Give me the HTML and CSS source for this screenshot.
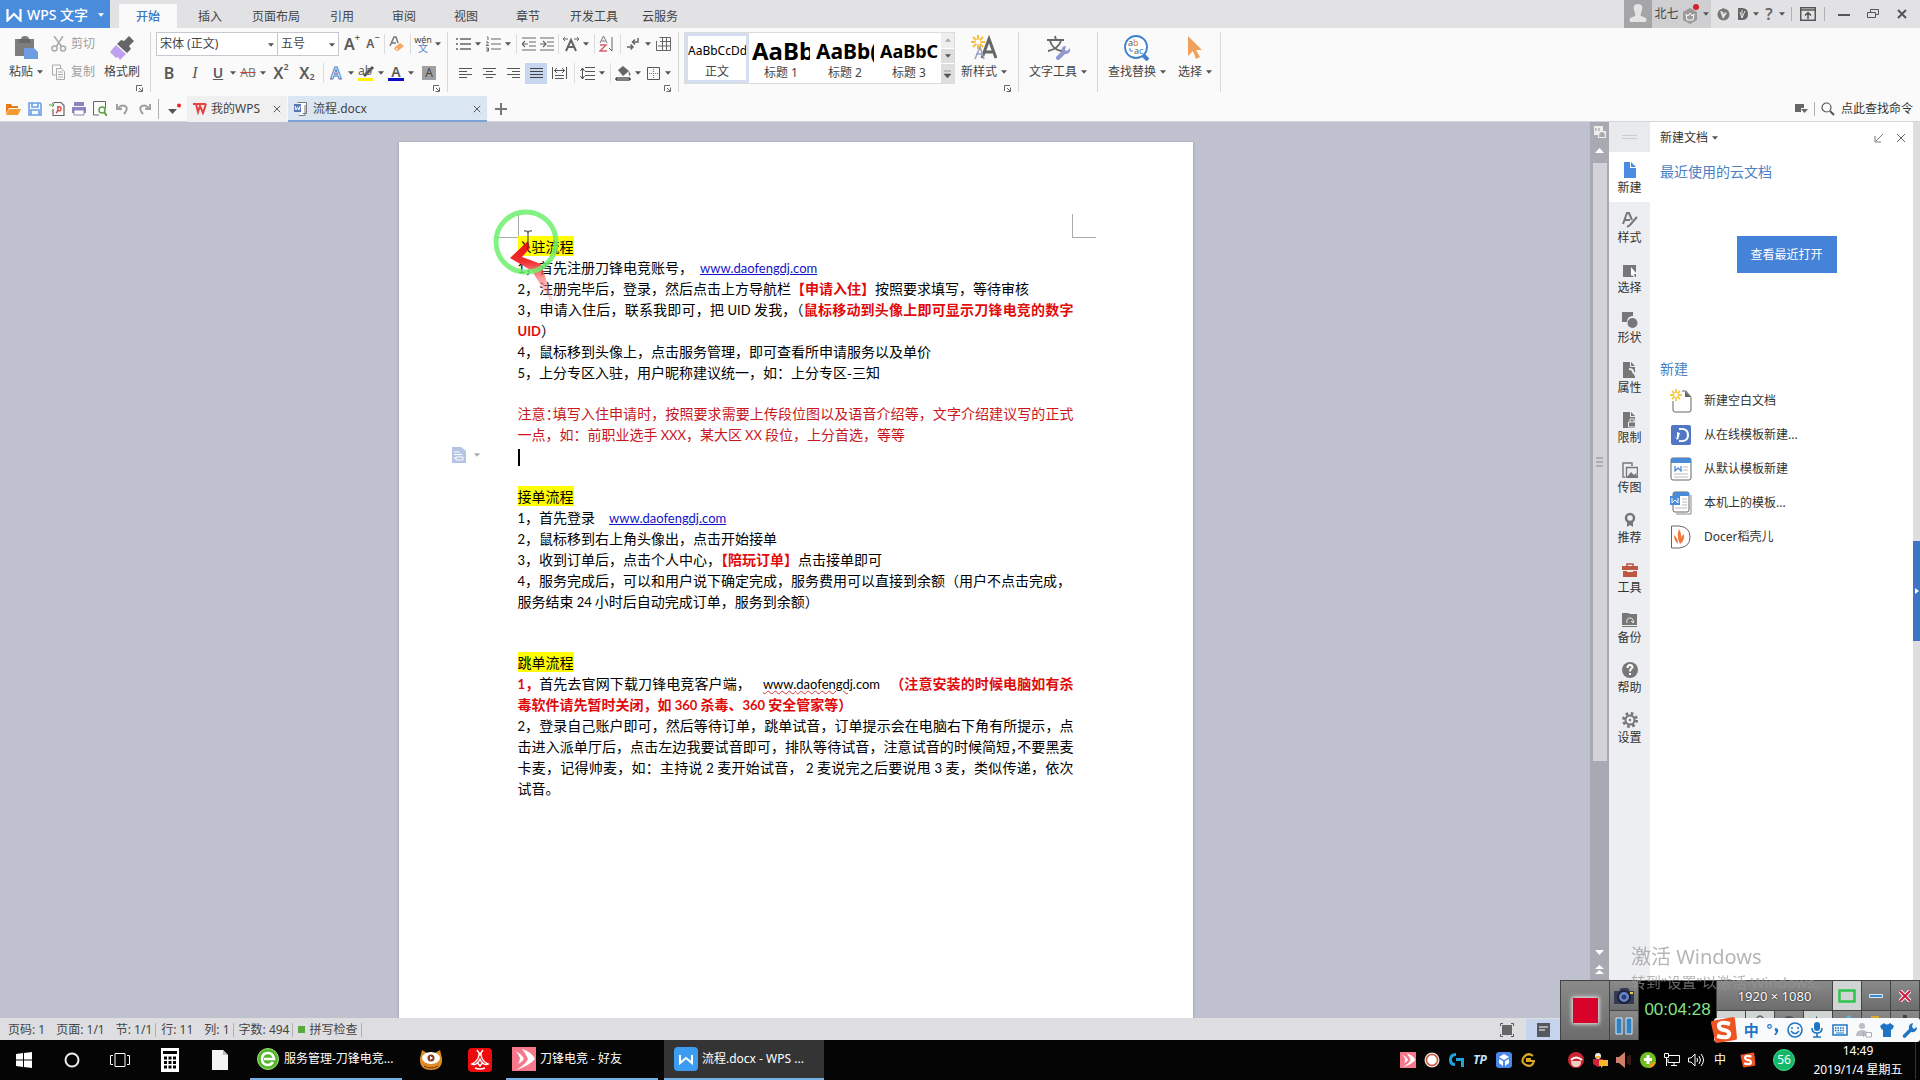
FILE: index.html
```html
<!DOCTYPE html>
<html lang="zh-CN">
<head>
<meta charset="utf-8">
<title>流程.docx - WPS 文字</title>
<link rel="stylesheet" href="styles.css">
</head>
<body>
<svg class="sprite" aria-hidden="true">
  <symbol id="caret" viewBox="0 0 7 4"><path d="M0 0h7L3.500 4z" fill="currentColor"/></symbol>
  <symbol id="close" viewBox="0 0 10 10"><path d="M1 1l8 8M9 1L1 9" stroke="currentColor" fill="none"/></symbol>
  <symbol id="launch" viewBox="0 0 7 7"><path d="M.5 6V.5H6M6.500 2.500v4h-4M3 3l3 3" stroke="#666" fill="none"/></symbol>
  <symbol id="wmark" viewBox="0 0 16 14"><path d="M1.500 1v11.500L8 6l6.500 6.500V1" fill="none" stroke="currentColor" stroke-width="2.200"/></symbol>
  <symbol id="sogou" viewBox="0 0 28 28"><path d="M2 5L23 1q2 0 2 2l2 19q0 2-2 2L7 27q-2 0-2-2L1 7q0-2 1-2z" fill="#ee5322"/><path d="M20 8q-10-3-11 1t5 5 5 5-12 1" fill="none" stroke="#fff" stroke-width="4"/></symbol>
  <symbol id="blade" viewBox="0 0 24 24"><path d="M0 0h24v24H0z" fill="#f7778b"/><path d="M10 2q10 3 13 10Q17 19 4 23q10-6 12-11Q14 7 10 2zM3 4q7 3 9 8-2 3-6 5 2-3 2-6-1-4-5-7z" fill="#fff"/></symbol>
</svg>
<div class="app">
  <header class="title">
    <button class="brand"><svg width="16" height="14"><use href="#wmark"/></svg><b>WPS 文字</b><svg class="caret"><use href="#caret"/></svg></button>
    <nav class="menu">
      <button class="on">开始</button><button>插入</button><button class="long">页面布局</button><button>引用</button><button>审阅</button><button>视图</button><button>章节</button><button class="long">开发工具</button><button>云服务</button>
    </nav>
    <div class="account">
      <span class="avatar"><svg width="20" height="20" viewBox="0 0 20 20"><path d="M10 1c4 0 5 3 4 6-1 4-2 4-1 6l5 2q1 1 0 4H2q-1-3 0-4l5-2c1-2 0-2-1-6-1-3 0-6 4-6z" fill="#e4e4e4"/></svg></span>
      <button class="user">北七<svg width="18" height="22" viewBox="0 0 18 22"><path d="M8 5l7 4v8l-7 4-7-4V9z" fill="#9a9a9a"/><path d="M4 11l2 2 2-3 2 3 2-2-1 6H5z" fill="none" stroke="#fff"/><circle cx="14" cy="4" r="3" fill="#d3222b"/></svg><svg class="caret"><use href="#caret"/></svg></button>
      <button class="b24"><svg width="13" height="13" viewBox="0 0 13 13"><circle cx="6.500" cy="6.500" r="6" fill="#777"/><path d="M3 3l7 2-4 6z" fill="#e2e2e4"/><path d="M6 0l1 6" stroke="#777"/></svg></button>
      <button class="b16"><svg width="12" height="12" viewBox="0 0 12 12"><path d="M1 0h4q6 0 6 6t-6 6H1z" fill="#666"/><path d="M3 4l2 6 3-7M5 10V2" stroke="#e2e2e4" fill="none"/></svg></button><svg class="caret c10"><use href="#caret"/></svg>
      <button class="b16 help">?</button><svg class="caret c10"><use href="#caret"/></svg>
      <i class="vs"></i>
      <button class="b24"><svg width="16" height="14" viewBox="0 0 16 14"><path d="M.7.7h14.600v12.600H.7zM.7 3h14.600M8 12V6M5 8.500l3-3 3 3" fill="none" stroke="#555" stroke-width="1.500"/></svg></button>
      <i class="vs"></i>
      <button class="win"><svg width="12" height="12" viewBox="0 0 12 12"><path d="M0 7h12" stroke="#555" stroke-width="2"/></svg></button>
      <button class="win"><svg width="12" height="10" viewBox="0 0 12 10"><path d="M.5 3.500h8v5h-8zM3.500 3V.5h8v5H9" fill="none" stroke="#555"/></svg></button>
      <button class="win"><svg width="10" height="10" viewBox="0 0 10 10"><path d="M1 1l8 8M9 1L1 9" stroke="#555" stroke-width="2"/></svg></button>
    </div>
  </header>

  <section class="ribbon">
    <div class="group clip">
      <button class="big"><svg width="26" height="26" viewBox="0 0 26 26"><path d="M2 4h6q0-3 4-3t4 3h5v9h-9v8H2z" fill="#7d7d7d"/><path d="M6 4h11v4H6z" fill="#696969"/><path d="M11 13h10l4 4v7H11z" fill="#6f9be0"/></svg><span>粘贴<svg class="caret"><use href="#caret"/></svg></span></button>
      <div class="pair">
        <button><svg width="16" height="16" viewBox="0 0 16 16"><g fill="none" stroke="#aaa" stroke-width="1.500"><path d="M3 0l8 11M12 0L5 11"/><circle cx="3.500" cy="12.500" r="2.500"/><circle cx="12" cy="12.500" r="2.500"/></g></svg>剪切</button>
        <button><svg width="16" height="16" viewBox="0 0 16 16"><path d="M5 11H1.500v-10h8v3M5.500 4.500h5l3 3v8h-8zM7 8h5M7 10.500h5M7 13h5" fill="none" stroke="#aaa"/></svg>复制</button>
      </div>
      <button class="big"><svg width="26" height="26" viewBox="0 0 26 26"><path d="M20 1l5 5-5 5 2 3-4 4-10-9 4-4 3 1z" fill="#666"/><path d="M7 10l10 9-6 6-2-3-2 1-6-6z" fill="#bf9ff0"/></svg><span>格式刷</span></button>
      <svg class="launch"><use href="#launch"/></svg>
    </div>
    <div class="group font">
      <div class="row">
        <label class="combo wide"><select aria-label="字体"><option>宋体 (正文)</option></select><svg class="caret"><use href="#caret"/></svg></label>
        <label class="combo"><select aria-label="字号"><option>五号</option></select><svg class="caret"><use href="#caret"/></svg></label>
        <button class="b26 glyph">A<sup>+</sup></button><button class="b16 glyph small">A<sup>−</sup></button><i class="sep"></i>
        <button class="b20"><svg width="16" height="16" viewBox="0 0 16 16"><path d="M1 10L5 1h2l2 6M3 7h4" fill="none" stroke="#777" stroke-width="1.500"/><path d="M5 12l6-5 4 3-6 5q-3 0-4-3z" fill="#f4a868"/><path d="M7 12l2 2" stroke="#fff"/></svg></button><i class="sep"></i>
        <button class="b20 pinyin">wén<em>文</em></button><svg class="caret c10"><use href="#caret"/></svg>
      </div>
      <div class="row">
        <button class="b26 glyph">B</button><button class="b26 glyph ital">I</button><button class="b20 glyph und">U</button><svg class="caret c10"><use href="#caret"/></svg>
        <button class="b20 strike">AB</button><svg class="caret c10"><use href="#caret"/></svg>
        <button class="b26 glyph">X<sup>2</sup></button><button class="b26 glyph">X<sub>2</sub></button><i class="sep"></i>
        <button class="b20 glyph outline">A</button><svg class="caret c10"><use href="#caret"/></svg>
        <button class="b20"><svg width="17" height="16" viewBox="0 0 17 16"><path d="M0 13h15v3H0z" fill="#fff200"/><path d="M6 11l9-9" stroke="#555" stroke-width="3"/><text x="0" y="10" font-size="12" fill="#666">ab</text></svg></button><svg class="caret c10"><use href="#caret"/></svg>
        <button class="b20 glyph bar">A</button><svg class="caret c10"><use href="#caret"/></svg>
        <button class="b26"><span class="shade">A</span></button>
      </div>
      <svg class="launch"><use href="#launch"/></svg>
    </div>
    <div class="group para">
      <div class="row">
        <button class="b20"><svg width="15" height="14" viewBox="0 0 15 14"><path d="M4 2h11M4 7h11M4 12h11M0 2h2M0 7h2M0 12h2" stroke="#666" stroke-width="1.500"/></svg></button><svg class="caret c10"><use href="#caret"/></svg>
        <button class="b20"><svg width="15" height="16" viewBox="0 0 15 16"><path d="M5 3h10M5 8h10M5 13h10" stroke="#666"/><path d="M1 1h1v3M0 6h2v1.500l-2 2h3M0 12h2.500v3H0M1 13.500h1" stroke="#666" fill="none"/></svg></button><svg class="caret c10"><use href="#caret"/></svg><i class="sep"></i>
        <button class="b20"><svg width="14" height="14" viewBox="0 0 14 14"><path d="M0 1h14M7 5h7M7 9h7M0 13h14M0 7h6M3 4L0 7l3 3" fill="none" stroke="#666" stroke-width="1.200"/></svg></button>
        <button class="b16"><svg width="14" height="14" viewBox="0 0 14 14"><path d="M0 1h14M7 5h7M7 9h7M0 13h14M0 7h6M3 4l3 3-3 3" fill="none" stroke="#666" stroke-width="1.200"/></svg></button><i class="sep"></i>
        <button class="b20"><svg width="18" height="16" viewBox="0 0 18 16"><path d="M4 15L9 4l5 11M6 11h6" stroke="#666" stroke-width="2" fill="none"/><path d="M1 3h5M3 1L1 3l2 2M12 3h5M15 1l2 2-2 2" stroke="#666" fill="none"/></svg></button><svg class="caret c10"><use href="#caret"/></svg><i class="sep"></i>
        <button class="b20"><svg width="16" height="16" viewBox="0 0 16 16"><path d="M1 7l3.500-7L8 7M2.500 5h4" stroke="#777" fill="none"/><path d="M1 9h6l-6 6h7" stroke="#d8606a" stroke-width="1.500" fill="none"/><path d="M13 1v14l-3-3" stroke="#666" fill="none"/></svg></button><i class="sep"></i>
        <button class="b20"><svg width="12" height="14" viewBox="0 0 12 14"><path d="M11 1v4H6M8 2.500L5.500 5 8 7.500M0 10h6M3.500 7.500L6 10l-2.500 2.500" stroke="#666" fill="none" stroke-width="1.500"/></svg></button><svg class="caret c10"><use href="#caret"/></svg>
        <button class="b20"><svg width="15" height="14" viewBox="0 0 15 14"><path d="M3.500.5h11v13H.5V4M4 4.500h10M2 9h12M6.500 1v12M10.500 1v12" fill="none" stroke="#666"/></svg></button>
      </div>
      <div class="row">
        <button class="b24"><svg width="13" height="12" viewBox="0 0 13 12"><path d="M0 1.500h13M0 4.500h8M0 7.500h13M0 10.500h8" stroke="#555"/></svg></button>
        <button class="b24"><svg width="13" height="12" viewBox="0 0 13 12"><path d="M0 1.500h13M3 4.500h7M0 7.500h13M3 10.500h7" stroke="#555"/></svg></button>
        <button class="b24"><svg width="13" height="12" viewBox="0 0 13 12"><path d="M0 1.500h13M5 4.500h8M0 7.500h13M5 10.500h8" stroke="#555"/></svg></button>
        <button class="b22 pressed"><svg width="13" height="12" viewBox="0 0 13 12"><path d="M0 1.500h13M0 4.500h13M0 7.500h13M0 10.500h13" stroke="#444"/></svg></button>
        <button class="b24"><svg width="15" height="12" viewBox="0 0 15 12"><path d="M.5 0v12M14.500 0v12M2 3.500h11M5 1L2.500 3.500 5 6M10 1l2.500 2.500L10 6M3 8.500h9M3 11.500h9" stroke="#555" fill="none"/></svg></button><i class="sep"></i>
        <button class="b20"><svg width="15" height="13" viewBox="0 0 15 13"><path d="M5 .5h10M5 4.500h10M5 8.500h10M5 12.500h10M2.500 1v11M.5 4l2-3 2 3M.5 9l2 3 2-3" stroke="#555" fill="none"/></svg></button><svg class="caret c10"><use href="#caret"/></svg><i class="sep"></i>
        <button class="b20"><svg width="16" height="16" viewBox="0 0 16 16"><path d="M3 5l5-4 6 5-6 5zM14 6q2 3 1 5-2-1-1-5z" fill="#666"/><path d="M1 13h14v2H1z" fill="#fff" stroke="#000"/></svg></button><svg class="caret c10"><use href="#caret"/></svg>
        <button class="b20"><svg width="13" height="13" viewBox="0 0 13 13"><path d="M.5.5h12v12H.5z" fill="none" stroke="#555"/><path d="M6.500 2v9M2 6.500h9" stroke="#777" stroke-dasharray="1 1"/></svg></button><svg class="caret c10"><use href="#caret"/></svg>
      </div>
      <svg class="launch"><use href="#launch"/></svg>
    </div>
    <div class="group styles">
      <div class="gallery">
        <button class="on"><span class="s0">AaBbCcDd</span>正文</button>
        <button><span class="s1">AaBb</span>标题 1</button>
        <button><span class="s2">AaBb(</span>标题 2</button>
        <button><span class="s3">AaBbC</span>标题 3</button>
        <div class="steps"><i class="off"><svg class="caret flip"><use href="#caret"/></svg></i><i><svg class="caret"><use href="#caret"/></svg></i><i><svg width="7" height="8" viewBox="0 0 7 8"><path d="M0 1h7M0 4h7L3.500 8z" fill="#555" stroke="#555" stroke-width=".5"/></svg></i></div>
      </div>
      <button class="big"><svg width="26" height="26" viewBox="0 0 26 26"><path d="M11 23L18 4l7 19M13 17h9" fill="none" stroke="#666" stroke-width="3"/><path d="M4 24l5-12 4 12M5 19h6" fill="none" stroke="#9a9fc4" stroke-width="1.500"/><path d="M7 0v14M0 7h14M2 2l10 10M12 2L2 12" stroke="#f8bd3c" stroke-width="2"/><circle cx="7" cy="7" r="2.500" fill="#fff"/></svg><span>新样式<svg class="caret"><use href="#caret"/></svg></span></button>
      <svg class="launch"><use href="#launch"/></svg>
    </div>
    <div class="group"><button class="big tool"><svg width="26" height="26" viewBox="0 0 26 26"><path d="M2 5h17M10 1l1 4M5 6q3 9 12 10M16 6q-3 8-13 10" fill="none" stroke="#666" stroke-width="1.800"/><path d="M11 22l6-6q-1-5 4-5l-1 4 2 1 3-3q1 6-5 6l-6 6q-4 0-3-3z" fill="#8f99cf"/></svg><span>文字工具<svg class="caret"><use href="#caret"/></svg></span></button></div>
    <div class="group"><button class="big tool"><svg width="26" height="26" viewBox="0 0 26 26"><circle cx="12" cy="12" r="11" fill="#fff" stroke="#3f81cb" stroke-width="1.800"/><path d="M19 20l5 5" stroke="#3f81cb" stroke-width="4"/><text x="4" y="11" font-size="9" fill="#555">a<tspan fill="#e07a2f">b</tspan></text><text x="10" y="19" font-size="9" fill="#555">a<tspan fill="#3f81cb">c</tspan></text><path d="M6 13v3h3" stroke="#3f81cb" fill="none"/></svg><span>查找替换<svg class="caret"><use href="#caret"/></svg></span></button><button class="big pick"><svg width="26" height="26" viewBox="0 0 26 26"><path d="M6 1l14 14h-6l4 7-4 2-3-8-5 5z" fill="#efa05c"/></svg><span>选择<svg class="caret"><use href="#caret"/></svg></span></button></div>
  </section>

  <section class="quick">
    <div class="qicons">
      <button class="b22"><svg width="16" height="14" viewBox="0 0 16 14"><path d="M1 12V2h5l1 2h6v2H4z" fill="#e87a12"/><path d="M4 7h12l-3 6H1z" fill="#f79a34"/></svg></button>
      <button class="b22"><svg width="14" height="14" viewBox="0 0 14 14"><path d="M1 1h11l1 1v11H1zM4 1v4h6V1M3 13V8h8v5" fill="#f4f8ff" stroke="#6d9ee6" stroke-width="1.600"/></svg></button>
      <button class="b22"><svg width="16" height="16" viewBox="0 0 16 16"><path d="M5 2.500V1.500h7l3 3v10H4V8" fill="none" stroke="#666" stroke-width="1.200"/><path d="M0 4h5M3 2l2 2-2 2" stroke="#4d9a3f" fill="none"/><path d="M8 6q4-1 4 2t-4 1M9 6q0 5-2 6" stroke="#d5504c" fill="none" stroke-width="1.500"/></svg></button>
      <button class="b22"><svg width="16" height="14" viewBox="0 0 16 14"><path d="M3 0h10v4H3zM1 5h14v6H1z" fill="#8d84bd"/><path d="M3 8h10v5H3z" fill="#fff" stroke="#8d84bd"/></svg></button>
      <button class="b22"><svg width="14" height="15" viewBox="0 0 14 15"><path d="M6 14H.5V.5h12V7" fill="none" stroke="#666"/><circle cx="9" cy="9" r="3" fill="none" stroke="#5da04b" stroke-width="1.500"/><path d="M11 11l3 4" stroke="#5da04b" stroke-width="2"/></svg></button>
      <button class="b22"><svg width="13" height="12" viewBox="0 0 13 12"><path d="M1 1v5h5M2 6q3-5 7-3t-1 8" fill="none" stroke="#a0a0a0" stroke-width="2"/></svg></button>
      <button class="b22"><svg width="13" height="12" viewBox="0 0 13 12"><path d="M12 1v5H7M11 6Q8 1 4 3t1 8" fill="none" stroke="#a0a0a0" stroke-width="2"/></svg></button>
      <i class="vs"></i>
      <button class="b24"><svg width="14" height="12" viewBox="0 0 14 12"><path d="M0 6h9l-4.500 5z" fill="#555"/><circle cx="11" cy="2.500" r="2" fill="#e22"/></svg></button>
    </div>
    <div class="doctab first"><svg width="16" height="12" viewBox="0 0 16 12"><path d="M1 1h3l2 8 2-6 3 7 3-9M5 1h9" fill="none" stroke="#e5403f" stroke-width="2"/></svg><span>我的WPS</span><button aria-label="关闭"><svg width="8" height="8"><use href="#close"/></svg></button></div>
    <div class="doctab on"><svg width="14" height="14" viewBox="0 0 14 14"><path d="M3.500.5h9v11h-4M11 3v10.500H5" fill="#fff" stroke="#777"/><path d="M0 2h7v8H0z" fill="#5a78b8"/><path d="M1 4l1 4 1.500-3L5 8l1-4" stroke="#fff" fill="none"/></svg><span>流程.docx</span><button aria-label="关闭"><svg width="8" height="8"><use href="#close"/></svg></button></div>
    <button class="add" aria-label="新建标签"><svg width="12" height="12" viewBox="0 0 12 12"><path d="M6 0v12M0 6h12" stroke="#777" stroke-width="2"/></svg></button>
    <div class="find"><svg width="13" height="10" viewBox="0 0 13 10"><path d="M0 0h9v4H6v4H0z" fill="#666"/><path d="M6 5h7l-3.500 4z" fill="#666"/></svg><i class="vs"></i><svg width="14" height="14" viewBox="0 0 14 14"><circle cx="5.500" cy="5.500" r="4.500" fill="none" stroke="#555" stroke-width="1.200"/><path d="M9 9l4 4" stroke="#555" stroke-width="2"/></svg><input aria-label="查找命令" placeholder="点此查找命令"></div>
  </section>

  <main class="work">
    <div class="canvas">
      <article class="page">
        <i class="corner tl"></i><i class="corner tr"></i>
        <section>
          <p><mark>入驻流程</mark></p>
          <p><span class="l">1</span>，首先注册刀锋电竞账号，<a class="gap" href="#">www.daofengdj.com</a></p>
          <p><span class="l">2</span>，注册完毕后，登录，然后点击上方导航栏<b>【申请入住】</b>按照要求填写，等待审核</p>
          <p class="full"><span class="l">3</span>，申请入住后，联系我即可，把 <span class="l">UID</span> 发我，（<b>鼠标移动到头像上即可显示刀锋电竞的数字</b></p>
          <p><b class="l">UID</b>）</p>
          <p><span class="l">4</span>，鼠标移到头像上，点击服务管理，即可查看所申请服务以及单价</p>
          <p><span class="l">5</span>，上分专区入驻，用户昵称建议统一，如：上分专区-三知</p>
        </section>
        <section class="note">
          <p class="full">注意<span class="half">：</span>填写入住申请时，按照要求需要上传段位图以及语音介绍等，文字介绍建议写的正式</p>
          <p>一点，如：前职业选手 <span class="l">XXX</span>，某大区 <span class="l">XX</span> 段位，上分首选，等等</p>
          <p><i class="cursor"></i></p>
          <button class="smart" aria-label="段落布局"><svg width="14" height="16" viewBox="0 0 14 16"><path d="M0 0h9l5 4v12H0z" fill="#b4c4e2"/><path d="M2 5h6M2 7.500h8M4 10h7v3H4zM4 11H2" stroke="#fff" fill="none"/></svg><svg class="caret"><use href="#caret"/></svg></button>
        </section>
        <section>
          <p><mark>接单流程</mark></p>
          <p><span class="l">1</span>，首先登录　<a href="#">www.daofengdj.com</a></p>
          <p><span class="l">2</span>，鼠标移到右上角头像出，点击开始接单</p>
          <p><span class="l">3</span>，收到订单后，点击个人中心，<b>【陪玩订单】</b>点击接单即可</p>
          <p><span class="l">4</span>，服务完成后，可以和用户说下确定完成，服务费用可以直接到余额（用户不点击完成，</p>
          <p>服务结束 <span class="l">24</span> 小时后自动完成订单，服务到余额）</p>
        </section>
        <section class="last">
          <p><mark>跳单流程</mark></p>
          <p class="full"><b><span class="l">1</span>，</b>首先去官网下载刀锋电竞客户端，<span class="l gap wide"><u>www.</u><u>daofengdj</u>.com</span><b>（注意安装的时候电脑如有杀</b></p>
          <p><b>毒软件请先暂时关闭，如 <span class="l">360</span> 杀毒、<span class="l">360</span> 安全管家等）</b></p>
          <p class="full"><span class="l">2</span>，登录自己账户即可，然后等待订单，跳单试音，订单提示会在电脑右下角有所提示，点</p>
          <p class="full">击进入派单厅后，点击左边我要试音即可，排队等待试音，注意试音的时候简短<span class="half">，</span>不要黑麦</p>
          <p class="full">卡麦，记得帅麦，如：主持说 <span class="l">2</span> 麦开始试音， <span class="l">2</span> 麦说完之后要说甩 <span class="l">3</span> 麦，类似传递，依次</p>
          <p>试音。</p>
        </section>
        <svg class="ring" width="72" height="110" viewBox="0 0 72 110"><defs><linearGradient id="trail" x1="0" y1="0" x2="0" y2="1"><stop offset="0" stop-color="#e80d0d"/><stop offset=".3" stop-color="#f03030"/><stop offset=".6" stop-color="#f77" stop-opacity=".6"/><stop offset="1" stop-color="#f88" stop-opacity=".1"/></linearGradient></defs><path d="M38 35L20 52l22 13 24 39-15-46-19-7 8-9z" fill="url(#trail)"/><circle cx="36" cy="36" r="30" fill="none" stroke="#6cf06c" stroke-opacity=".85" stroke-width="5"/><path d="M34 25h3q1 0 1 2v14q0 2-1 2M42 25h-3q-1 0-1 2" fill="none" stroke="#333"/></svg>
      </article>
    </div>
    <div class="vscroll">
      <svg width="12" height="12" viewBox="0 0 12 12"><path d="M0 0h9v5h3v7H4V9H0z" fill="#eee"/><path d="M2 2v3M5 2v3" stroke="#999"/><path d="M5 11q0-5 3-5t3 5z" fill="#aaa"/></svg>
      <svg width="9" height="5" viewBox="0 0 9 5"><path d="M0 5h9L4.500 0z" fill="#fff"/></svg>
      <div class="track"><div class="thumb"><svg width="7" height="10" viewBox="0 0 7 10"><path d="M0 1h7M0 5h7M0 9h7" stroke="#888"/></svg></div></div>
      <svg width="9" height="5" viewBox="0 0 9 5"><path d="M0 0h9L4.500 5z" fill="#fff"/></svg>
      <svg width="9" height="9" viewBox="0 0 9 9"><path d="M0 4h9L4.500 0zM0 9h9L4.500 5z" fill="#fff"/></svg>
    </div>
    <nav class="side">
      <div class="grip"><svg width="15" height="4" viewBox="0 0 15 4"><path d="M0 .5h15M0 3.500h15" stroke="#ccc"/></svg></div>
      <button class="on"><svg width="16" height="16" viewBox="0 0 16 16"><path d="M2 0h6v6h6v10H2zM9 0l5 5H9z" fill="#4a8de0"/></svg>新建</button>
      <button><svg width="16" height="16" viewBox="0 0 16 16"><path d="M1 12L5 1h2l3 7M3 8h5" fill="none" stroke="#777" stroke-width="2"/><path d="M15 5l-7 8-3 2" stroke="#777" stroke-width="2" fill="none"/></svg>样式</button>
      <button><svg width="16" height="16" viewBox="0 0 16 16"><path d="M1 3h13v12H1z" fill="#777"/><path d="M9 5l6 7h-3l1 4-3-3-1 1z" fill="#fff"/></svg>选择</button>
      <button><svg width="16" height="16" viewBox="0 0 16 16"><path d="M0 0h11v4q-6 0-6 6H0z" fill="#777"/><circle cx="10.500" cy="11" r="5" fill="#777"/></svg>形状</button>
      <button><svg width="16" height="16" viewBox="0 0 16 16"><path d="M1 0h7v5h5v11H1zM9 0l4 4H9z" fill="#777"/><path d="M7 7q4 0 4 3l4 5" fill="none" stroke="#eee" stroke-width="2"/></svg>属性</button>
      <button><svg width="16" height="16" viewBox="0 0 16 16"><path d="M1 0h7v5h5v11H1zM9 0l4 4H9z" fill="#777"/><path d="M6.500 10h7v5h-7zM8 10V7h4v3" fill="#777" stroke="#eee"/></svg>限制</button>
      <button><svg width="16" height="16" viewBox="0 0 16 16"><path d="M3 15H1V1h9v3M4.500 5.500h11v10h-11z" fill="none" stroke="#777" stroke-width="1.400"/><path d="M5 15l4-5 3 3 2-2 1 4z" fill="#777"/></svg>传图</button>
      <button><svg width="16" height="16" viewBox="0 0 16 16"><circle cx="8" cy="6" r="4" fill="none" stroke="#777" stroke-width="2.500"/><path d="M5 9v6l3-2 3 2V9l-3 2z" fill="#777"/></svg>推荐</button>
      <button><svg width="16" height="16" viewBox="0 0 16 16"><path d="M0 4h16v4H0zM1 9h14v6H1z" fill="#bf5641"/><path d="M5 4V2h6v2" fill="none" stroke="#bf5641" stroke-width="1.500"/><path d="M5 8h6v2H5z" fill="#eee"/></svg>工具</button>
      <button><svg width="16" height="16" viewBox="0 0 16 16"><path d="M0 1h6l2 1h7v11H0zM0 14h15v1H0z" fill="#777"/><path d="M5 11q-1-5 3-5t3 5M9 9l2 2 1-2" fill="none" stroke="#eee"/></svg>备份</button>
      <button><svg width="16" height="16" viewBox="0 0 16 16"><circle cx="8" cy="8" r="8" fill="#777"/><path d="M5.500 6q0-3 2.500-3t2.500 2.500Q8 7 8 9.500M8 11v2" fill="none" stroke="#fff" stroke-width="2"/></svg>帮助</button>
      <button><svg width="16" height="16" viewBox="0 0 16 16"><circle cx="8" cy="8" r="6.500" fill="none" stroke="#777" stroke-width="3" stroke-dasharray="2.600 2.500"/><circle cx="8" cy="8" r="4.500" fill="none" stroke="#777" stroke-width="2"/><circle cx="8" cy="8" r="1.200" fill="#777"/></svg>设置</button>
    </nav>
    <aside class="pane">
      <div class="phead"><span>新建文档</span><svg class="caret"><use href="#caret"/></svg><svg class="push" width="10" height="10" viewBox="0 0 10 10"><path d="M9 1L2 8M1 3v6h6" stroke="#777" fill="none"/></svg><svg width="10" height="10"><use href="#close"/></svg></div>
      <h2>最近使用的云文档</h2>
      <button class="primary">查看最近打开</button>
      <h2>新建</h2>
      <a href="#"><svg width="22" height="24" viewBox="0 0 22 24"><path d="M12 2h4l5 6v13q0 2-2 2H5q-2 0-2-2v-9" fill="none" stroke="#666"/><path d="M15 2v6h6z" fill="#666"/><path d="M6 0v12M0 6h12M2 2l8 8M10 2l-8 8" stroke="#f6c948" stroke-width="1.800"/><circle cx="6" cy="6" r="2" fill="#fff"/></svg>新建空白文档</a>
      <a href="#"><svg width="22" height="24" viewBox="0 0 22 24"><rect x="1" y="2" width="20" height="20" rx="2" fill="#5076c4"/><path d="M9 6q9-1 9 6t-9 6" fill="none" stroke="#fff" stroke-width="2"/><path d="M4 12l3 5V9l3 1-2 7" fill="#fff"/></svg>从在线模板新建...</a>
      <a href="#"><svg width="22" height="24" viewBox="0 0 22 24"><rect x="1" y="1" width="20" height="22" rx="2" fill="#fff" stroke="#666"/><path d="M1 1h20v5H1z" fill="#4a8bd8"/><path d="M5 9v5l3-3 3 3V9" fill="none" stroke="#4a8bd8" stroke-width="1.300"/><path d="M13 10h5M13 13h5M4 17h14M4 20h14" stroke="#bbb"/></svg>从默认模板新建</a>
      <a href="#"><svg width="22" height="24" viewBox="0 0 22 24"><path d="M6 23h15V4" fill="none" stroke="#888"/><rect x="3" y="1" width="16" height="20" rx="2" fill="#fff" stroke="#666"/><path d="M3 1h16v4H10v9H0V5h3z" fill="#4a8bd8"/><path d="M2 7v5l3-3 3 3V7" fill="none" stroke="#fff"/><path d="M12 8h5M12 11h5M12 14h5M5 17h12" stroke="#bbb"/></svg>本机上的模板...</a>
      <a href="#"><svg width="22" height="24" viewBox="0 0 22 24"><path d="M1.500 1H9q11 1 11 11T9 23H1.500z" fill="#fff" stroke="#666"/><path d="M9 4q4 6 1 15-4-8-1-15zM4 10q4 3 4 9-4-3-4-9zM14 9q1 7-4 10 0-7 4-10z" fill="#f1783c"/></svg>Docer稻壳儿</a>
    </aside>
    <div class="edge"><button aria-label="收起"><svg width="4" height="6" viewBox="0 0 4 6"><path d="M0 0v6l4-3z" fill="#fff"/></svg></button></div>
  </main>

  <footer class="status">
    <span>页码: 1</span><span>页面: 1/1</span><span class="tight">节: 1/1</span><i class="vs"></i><span>行: 11</span><span class="tight">列: 1</span><i class="vs"></i><span class="tight">字数: 494</span><i class="vs"></i><i class="ok"></i><span class="tight">拼写检查</span><i class="vs"></i>
    <div class="views"><button><svg width="14" height="14" viewBox="0 0 14 14"><path d="M2 2h10v10H2z" fill="#666"/><path d="M.5 3V.5H3M11 .5h2.500V3M13.500 11v2.500H11M3 13.500H.5V11" fill="none" stroke="#555"/></svg></button><button class="on"><svg width="13" height="14" viewBox="0 0 13 14"><path d="M0 0h13v14H0z" fill="#55585f"/><path d="M2 4h9M2 7h6" stroke="#fff"/></svg></button></div>
  </footer>

  <footer class="task">
    <button class="t48"><svg width="16" height="16" viewBox="0 0 16 16"><path d="M0 2l7-1v6.500H0zM8 1l8-1v7.500H8zM0 8.500h7V15l-7-1zM8 8.500h8V16l-8-1z" fill="#fff"/></svg></button>
    <button class="t48"><svg width="16" height="16" viewBox="0 0 16 16"><circle cx="8" cy="8" r="6.500" fill="none" stroke="#eee" stroke-width="2"/></svg></button>
    <button class="t48"><svg width="20" height="14" viewBox="0 0 20 14"><path d="M5 .5h10v13H5zM3 2.500H.5v9H3M17 2.500h2.500v9H17" fill="none" stroke="#fff"/></svg></button>
    <button class="t52"><svg width="18" height="24" viewBox="0 0 18 24"><path d="M0 0h18v24H0z" fill="#fff"/><path d="M2 3h14v3H2z"/><path d="M3 10h12M3 14.500h12M3 19h12" stroke="#000" stroke-width="3" stroke-dasharray="3 1.500"/></svg></button>
    <button class="t48"><svg width="16" height="20" viewBox="0 0 16 20"><path d="M0 0h11l5 5v15H0z" fill="#f4f4f4"/><path d="M11 0v5h5z" fill="#bbb"/></svg></button>
    <button class="win-item"><svg width="24" height="24" viewBox="0 0 24 24"><circle cx="12" cy="12" r="10.500" fill="#54b72c" stroke="#a6e27c"/><path d="M17 15q-2 3-5 3-6 0-6-6t6-6q5 0 6 6H8" fill="none" stroke="#fff" stroke-width="2.500"/></svg>服务管理-刀锋电竞...</button>
    <button class="t58"><svg width="24" height="24" viewBox="0 0 24 24"><path d="M1 10L3 2l5 3h8l5-3 2 8q1 12-11 12T1 10z" fill="#dd8c25"/><ellipse cx="12" cy="10" rx="9" ry="6" fill="#fff"/><circle cx="12" cy="10" r="3.500" fill="#8a3b20"/><path d="M11 8l3 2-3 2z" fill="#fff"/><path d="M5 18q7 4 14 0" stroke="#6c3512" fill="none"/></svg></button>
    <button class="t40"><svg width="24" height="24" viewBox="0 0 24 24"><rect width="24" height="24" rx="4" fill="#ee0b0e"/><path d="M11 7q-1 6-7 9 5 2 8-5 3 7 8 5-6-3-7-9M9 14l3 4 3-4M7 20q5 2 10 0M9 2l2 3M15 2l-2 3" fill="none" stroke="#fff" stroke-width="1.400"/><circle cx="12" cy="6" r="1.800" fill="#fff"/></svg></button>
    <button class="win-item"><svg width="24" height="24"><use href="#blade"/></svg>刀锋电竞 - 好友</button>
    <button class="win-item on"><svg width="24" height="24" viewBox="0 0 24 24"><rect width="24" height="24" rx="4" fill="#3b9cf2"/><path d="M6 8v8l6-5 6 5V8" fill="none" stroke="#fff" stroke-width="2"/></svg>流程.docx - WPS ...</button>
    <div class="tray">
      <i><svg width="16" height="16" viewBox="0 0 24 24"><use href="#blade"/></svg></i>
      <i><svg width="16" height="16" viewBox="0 0 16 16"><circle cx="8" cy="8" r="7.500" fill="#f6ded7"/><circle cx="8" cy="8" r="5.500" fill="#fff" stroke="#c55b48" stroke-width="1.500"/></svg></i>
      <i><svg width="16" height="16" viewBox="0 0 16 16"><path d="M8 1q-7 0-7 7 0 6 6 6v-3q-3 0-3-3 0-4 4-4zM8 6h8v9h-3V9H8z" fill="#1fa3dc"/></svg></i>
      <i class="tp">TP</i>
      <i><svg width="16" height="16" viewBox="0 0 16 16"><rect width="16" height="16" rx="3" fill="#4b86e8"/><path d="M8 2l5 3-5 3-5-3zM3 7l4 2v5l-4-3zM13 7L9 9v5l4-3z" fill="#fff"/></svg></i>
      <i><svg width="14" height="14" viewBox="0 0 14 14"><path d="M12 3Q7-1 3 4T5 12t8-4H6V6h4" fill="none" stroke="#d8a823" stroke-width="2.200"/></svg></i>
      <i></i>
      <i><svg width="16" height="16" viewBox="0 0 16 16"><circle cx="8" cy="8" r="8" fill="#c92632"/><path d="M3 9h10q0 6-5 6t-5-6z" fill="#eed0c0"/><path d="M3 8q5-5 11 0" stroke="#fff" fill="none" stroke-width="2"/></svg></i>
      <i><svg width="16" height="16" viewBox="0 0 16 16"><circle cx="6" cy="4" r="3" fill="#eee"/><path d="M1 7h10v6l-5 2-5-3z" fill="#c23"/><path d="M4 4h4v2H4zM7 8h9v6h-5l-2 2v-2H7z" fill="#f6b52a"/></svg></i>
      <i><svg width="16" height="16" viewBox="0 0 16 16"><path d="M0 5h3l6-5v16l-6-5H0z" fill="#d0806a"/><path d="M12 4v8M14 3v10" stroke="#702c22"/></svg></i>
      <i><svg width="16" height="16" viewBox="0 0 16 16"><circle cx="8" cy="8" r="8" fill="#6fbe20"/><path d="M8 3v9M4 7.500h8" stroke="#fff" stroke-width="3"/><path d="M9 16q0-6 7-6-1 5-7 6z" fill="#f39a22"/></svg></i>
      <i><svg width="16" height="14" viewBox="0 0 16 14"><path d="M5 2.500h10.500v7H4V6M7 12.500h6M10 10v3M.5.5h4v4h-4zM2.500 5v8" fill="none" stroke="#fff"/></svg></i>
      <i><svg width="16" height="14" viewBox="0 0 16 14"><path d="M.5 5H3l4-4v12L3 9H.5zM9 5q1 2 0 4M11 3q3 4 0 8M13 1q5 6 0 12" fill="none" stroke="#fff"/></svg></i>
      <i>中</i>
      <i class="imetray"><svg width="16" height="16"><use href="#sogou"/></svg></i>
      <i class="score">56</i>
      <div class="clock"><span>14:49</span><span>2019/1/4 星期五</span></div>
    </div>
  </footer>
</div>

<div class="recorder">
  <button class="rec" aria-label="停止"><i></i></button>
  <button aria-label="截图"><svg width="22" height="18" viewBox="0 0 22 18"><path d="M1 4h5l2-3h7l2 3h4v13H1z" fill="#343b55"/><circle cx="11" cy="10" r="6" fill="#6a86c8" stroke="#1b2136" stroke-width="2"/><circle cx="11" cy="10" r="2.500" fill="#2c3d7c"/><path d="M17 5h3v2h-3z" fill="#f0c850"/></svg></button>
  <button aria-label="暂停"><svg width="18" height="18" viewBox="0 0 18 18"><path d="M1 1h6v16H1zM11 1h6v16h-6z" fill="#2f83c4" stroke="#d7e9f7"/></svg></button>
  <output>00:04:28</output>
  <span class="res">1920 × 1080</span>
  <button class="lit"><svg width="18" height="14" viewBox="0 0 18 14"><path d="M1.500 1.500h15v11h-15z" fill="none" stroke="#2fc24c" stroke-width="2.500"/></svg></button>
  <button><svg width="14" height="6" viewBox="0 0 14 6"><path d="M.5 1.500h13v3H.5z" fill="#3b86c8" stroke="#dce9f4"/></svg></button>
  <button><svg width="12" height="12" viewBox="0 0 12 12"><path d="M1 1l10 10M11 1L1 11" stroke="#fff" stroke-width="4"/><path d="M1 1l10 10M11 1L1 11" stroke="#d3163a" stroke-width="2"/></svg></button>
  <div class="tools"><i class="lit"></i><i class="lit"><svg width="8" height="8" viewBox="0 0 8 8"><path d="M1 8V3q3-4 6 0v5" fill="none" stroke="#666" stroke-width="1.500"/></svg></i><i><svg width="12" height="6" viewBox="0 0 12 6"><ellipse cx="6" cy="6" rx="6" ry="5" fill="#555"/></svg></i><i class="lit"><svg width="6" height="8" viewBox="0 0 6 8"><path d="M1 1v7h5z" fill="#333"/></svg></i><i><svg width="10" height="6" viewBox="0 0 10 6"><path d="M0 6l7-6 3 3-3 3z" fill="#5fb1de"/></svg></i><i><svg width="10" height="6" viewBox="0 0 10 6"><path d="M0 1h8v5H0z" fill="#dca82d"/></svg></i><i><svg width="10" height="6" viewBox="0 0 10 6"><path d="M3 0h4v4h3v2H0V4h3z" fill="#444"/></svg></i></div>
</div>
<div class="ime">
  <svg class="slogo" width="28" height="28"><use href="#sogou"/></svg>
  <b>中</b>
  <svg width="12" height="12" viewBox="0 0 12 12"><circle cx="2.500" cy="2.500" r="1.800" fill="none" stroke="#1f74c4" stroke-width="1.200"/><path d="M8 4q4 0 3 4l-2 3H7l2-3q-2-2-1-4z" fill="#1f74c4"/></svg>
  <svg width="16" height="16" viewBox="0 0 16 16"><circle cx="8" cy="8" r="7" fill="none" stroke="#1f74c4" stroke-width="1.600"/><path d="M5 5v2M11 5v2M4 9q4 5 8 0" fill="none" stroke="#1f74c4" stroke-width="1.500"/></svg>
  <svg width="14" height="16" viewBox="0 0 14 16"><rect x="4" y="0" width="6" height="9" rx="3" fill="#1f74c4"/><path d="M2 6q0 5 5 5t5-5M7 11v4M3 15h8" fill="none" stroke="#1f74c4" stroke-width="1.600"/></svg>
  <svg width="16" height="12" viewBox="0 0 16 12"><path d="M1 1h14v10H1z" fill="none" stroke="#1f74c4" stroke-width="1.500"/><path d="M3 4h10M3 6.500h10" stroke="#1f74c4" stroke-width="1.300" stroke-dasharray="1.500 1"/><path d="M4 9h8" stroke="#1f74c4"/></svg>
  <svg width="16" height="16" viewBox="0 0 16 16"><circle cx="6" cy="4" r="3" fill="#b9bdc5"/><path d="M0 14q0-6 6-6t6 6z" fill="#b9bdc5"/><path d="M7.500 10v5M10 10.500h5.500V15H10z" fill="#fff" stroke="#a9adb5"/></svg>
  <svg width="14" height="14" viewBox="0 0 14 14"><path d="M4 0q3 3 6 0l4 3-2 4-1-1v8H3V6L2 7 0 3z" fill="#1f74c4"/></svg>
  <svg width="15" height="15" viewBox="0 0 15 15"><path d="M1 12l6-6q-1-5 4-6L10 4l2 2 3-2q0 6-6 5l-6 6q-3 0-2-3z" fill="#1f74c4"/></svg>
</div>
<div class="activate"><p>激活 Windows</p><p>转到“设置”以激活 Windows。</p></div>
</body>
</html>
```
FILE: styles.css
```css
* { box-sizing: border-box; }
body { margin: 0; overflow: hidden; background: #000; color: #444; font: 12px/16px "Noto Sans", "Noto Sans CJK SC", sans-serif; }
button { margin: 0; padding: 0; border: 0; background: none; color: inherit; font: inherit; white-space: nowrap; display: flex; align-items: center; justify-content: center; }
svg { display: block; flex: none; }
p, h2 { margin: 0; font-weight: 400; }
i { font-style: normal; }
.sprite { position: absolute; width: 0; height: 0; }
.caret { width: 6px; height: 4px; color: #555; }
.c10 { width: 10px; padding: 0 2px; }
.b16 { width: 16px; } .b20 { width: 20px; } .b22 { width: 22px; } .b24 { width: 24px; } .b26 { width: 26px; }
.vs { width: 1px; height: 14px; background: #b0b0b4; flex: none; }
.app { height: 100vh; display: grid; grid-template-rows: 28px 68px 26px minmax(0, 1fr) 22px 40px; }

/* title bar */
.title { display: flex; background: #e2e2e4; }
.brand { width: 110px; background: #4a8cdc; color: #fff; gap: 5px; font-size: 14px; padding-top: 1px; }
.brand b { margin-right: 5px; font-weight: 500; }
.brand .caret { color: #fff; }
.menu { display: flex; padding-left: 7px; }
.menu button { width: 58px; margin: 4px 2px 0; padding-top: 2px; }
.menu .long { width: 66px; }
.menu .on { background: #fafafa; color: #3b74bd; font-weight: 500; }
.account { margin-left: auto; display: flex; align-items: center; padding-right: 4px; }
.avatar { width: 28px; height: 28px; background: #a5a5a7; display: flex; align-items: end; justify-content: center; padding-bottom: 5px; }
.user { width: 59px; height: 28px; background: #cfcfd1; gap: 3px; }
.help { font-size: 16px; font-weight: 600; color: #666; }
.account .vs { margin: 0 4px; }
.win { width: 29px; height: 28px; }

/* ribbon */
.ribbon { display: flex; background: #fafafa; padding-top: 4px; }
.group { position: relative; display: flex; height: 60px; border-right: 1px solid #d8d8da; }
.launch { position: absolute; right: 7px; bottom: 0; width: 7px; height: 7px; }
.big { flex-direction: column; justify-content: start; padding-top: 3px; gap: 3px; }
.big span { display: flex; align-items: center; gap: 4px; height: 16px; }
.clip { width: 151px; padding-left: 5px; }
.clip .big { width: 42px; }
.pair { width: 54px; padding: 4px 0 0 4px; color: #a0a0a0; }
.pair button { height: 16px; gap: 4px; margin-bottom: 12px; }
.font { width: 297px; flex-direction: column; padding-left: 5px; }
.row { display: flex; height: 24px; align-items: center; }
.row + .row { margin-top: 5px; }
.combo { position: relative; width: 61px; height: 24px; border: 1px solid #c8c8cc; border-left: 0; background: #fff; }
.combo.wide { width: 122px; border-left: 1px solid #c8c8cc; }
.combo select { appearance: none; width: 100%; height: 22px; border: 0; background: none; padding: 0 3px; color: #444; font: inherit; }
.combo .caret { position: absolute; right: 3px; top: 10px; }
.sep { width: 6px; height: 20px; background: linear-gradient(#dcdcde, #dcdcde) center / 1px 100% no-repeat; }
.glyph { font-size: 16px; font-weight: 600; color: #5a5a5a; }
.glyph sup, .glyph sub { font-size: 9px; line-height: 8px; }
.glyph sup { align-self: start; margin-top: -2px; }
.glyph sub { align-self: end; }
.small { font-size: 12px; }
.ital { font-family: "Liberation Serif", serif; font-style: italic; font-weight: 400; }
.und { text-decoration: underline; font-size: 14px; }
.strike { color: #777; text-decoration: line-through #c44; }
.outline { color: #fff; -webkit-text-stroke: 1px #4a7fcb; }
.bar { font-size: 14px; line-height: 13px; border-bottom: 3px solid #0a0ac8; width: 16px; margin: 0 2px; }
.shade { width: 14px; height: 14px; line-height: 14px; background: #a0a0a0; color: #444; }
.pinyin { flex-direction: column; font-size: 9px; line-height: 9px; }
.pinyin em { font-style: normal; color: #4a7fcb; font-size: 10px; }
.para { width: 231px; flex-direction: column; padding-left: 5px; }
.pressed { background: #c5d6ee; height: 21px; }
.styles { width: 340px; padding-left: 5px; }
.gallery { display: flex; width: 271px; height: 52px; border: 1px solid #dcdcde; background: #fff; }
.gallery > button { flex: 1; min-width: 0; flex-direction: column; overflow: hidden; justify-content: start; padding: 4px 3px 0; }
.gallery > .on { border: 3px solid #d4def0; padding: 1px 0 0; }
.gallery span { height: 28px; line-height: 28px; width: 100%; overflow: hidden; text-align: left; color: #000; font-weight: 700; }
.gallery .s0 { font-size: 12px; font-weight: 400; }
.gallery .s1 { font-size: 24px; } .gallery .s2 { font-size: 21px; } .gallery .s3 { font-size: 18px; }
.steps { width: 13px; display: grid; gap: 1px; background: #fff; }
.steps i { background: #dededf; display: flex; align-items: center; justify-content: center; }
.steps .off { opacity: .5; }
.flip { transform: rotate(180deg); }
.styles .big { padding-left: 6px; }
.tool { width: 78px; }
.pick { width: 44px; padding-right: 6px; }

/* quick access and document tabs */
.quick { display: flex; align-items: center; background: #fafafa; border-bottom: 1px solid #d4d4da; }
.qicons { display: flex; align-items: center; width: 187px; padding-left: 2px; }
.qicons .vs { height: 20px; margin: 0 4px 0 3px; }
.doctab { display: flex; align-items: center; gap: 5px; width: 199px; height: 26px; padding: 2px 6px 0; background: #dbe6f3; border-bottom: 2px solid #7ba3d3; }
.doctab.first { width: 100px; margin-right: 1px; gap: 3px; padding: 0 6px 0 5px; background: #f0f0f1; border: 0; }
.doctab button { margin-left: auto; }
.doctab svg { color: #333; }
.add { width: 28px; }
.find { margin-left: auto; display: flex; align-items: center; width: 125px; gap: 6px; }
.find input { width: 80px; border: 0; padding: 0; background: none; font: inherit; }
.find input::placeholder { color: #333; opacity: 1; }

/* work area */
.work { display: grid; grid-template-columns: minmax(0, 1fr) 19px 41px 263px 7px; }
.canvas { background: #c0c1ce; display: flex; justify-content: center; padding: 20px 0 0 1px; overflow: hidden; }
.page { position: relative; width: 794px; height: 1123px; flex: none; background: #fff; padding: 94px 119px; box-shadow: -1px 0 2px #a9aab8, 1px 0 2px #a9aab8; color: #000; font-size: 14px; line-height: 21px; }
.page section { position: relative; margin-bottom: 20px; }
.page .last { margin-top: 40px; }
.page p { height: 21px; white-space: nowrap; font-family: "Noto Sans CJK SC", sans-serif; }
.page .full { text-align: justify; text-align-last: justify; }
.page b { color: #e00b0b; }
.page .note { color: #c8161d; }
.l, .page a { font-family: Lato, "Noto Sans CJK SC", sans-serif; font-size: 13px; }
.page a { color: #1414c8; }
.gap { margin: 0 7px; }
.gap.wide { margin: 0 10px 0 12px; }
.half { font-feature-settings: "halt"; }
.l u { text-decoration: underline wavy #d33 1px; }
.page mark { background: #ff0; color: #000; display: inline-block; height: 20px; line-height: 20px; }
.cursor { display: inline-block; width: 2px; height: 17px; background: #000; vertical-align: middle; }
.corner { position: absolute; top: 72px; width: 24px; height: 24px; border-bottom: 1px solid #aaa; }
.tl { left: 96px; border-right: 1px solid #aaa; }
.tr { right: 97px; border-left: 1px solid #aaa; }
.smart { position: absolute; left: -66px; bottom: 3px; gap: 8px; }
.smart .caret { color: #aaa; }
.ring { position: absolute; left: 91px; top: 64px; }
.vscroll { background: #a9a9b3; display: flex; flex-direction: column; align-items: center; gap: 10px; padding: 4px 3px 44px; }
.track { flex: 1; width: 14px; }
.thumb { height: 77%; background: #d2d2d8; display: flex; align-items: center; justify-content: center; }
.side { background: #edeef1; color: #333; }
.side .grip { height: 30px; background: #e9eaed; display: flex; align-items: center; justify-content: center; }
.side button { width: 100%; height: 50px; flex-direction: column; gap: 2px; padding-top: 3px; }
.side .on { background: #fff; }
.pane { background: #fff; padding-left: 10px; display: flex; flex-direction: column; color: #333; }
.phead { display: flex; align-items: center; height: 32px; gap: 4px; padding-right: 7px; margin-bottom: 7px; color: #666; }
.phead span { color: #333; }
.phead .push { margin-left: auto; margin-right: 8px; }
.pane h2 { font-size: 14px; line-height: 22px; color: #4a7fc4; }
.primary { align-self: center; width: 100px; height: 37px; margin: 53px 0 85px; background: #4483d8; color: #fff; }
.pane a { display: flex; align-items: center; gap: 12px; height: 34px; padding-left: 10px; color: #333; text-decoration: none; }
.pane h2 + a { margin-top: 4px; }
.edge { background: #dedee0; display: flex; align-items: center; }
.edge button { width: 7px; height: 100px; margin-top: 42px; background: #3d74c6; }

/* status bar */
.status { display: flex; align-items: center; background: #dedee0; padding: 1px 0 0 8px; }
.status span { margin-right: 11px; }
.status .tight { margin-right: 3px; }
.status .vs { margin-right: 5px; }
.ok { width: 7px; height: 7px; margin-right: 4px; background: #5aa83c; }
.views { margin-left: auto; display: flex; height: 22px; margin-right: 360px; }
.views button { width: 38px; }
.views .on { width: 34px; background: #c5d4ec; }

/* taskbar */
.task { display: flex; background: #050505; color: #fff; }
.t40 { width: 40px; } .t48 { width: 48px; } .t52 { width: 52px; } .t58 { width: 58px; }
.win-item { gap: 4px; justify-content: start; width: 152px; padding-left: 6px; margin-left: 6px; border-bottom: 2px solid #76b0e2; }
.win-item.on { width: 160px; padding-left: 10px; background: #343434; }
.tray { margin-left: auto; display: flex; align-items: center; }
.tray i { width: 24px; display: flex; justify-content: center; }
.tray .tp { font-weight: 700; font-style: italic; color: #bfe4ff; }
.tray .imetray { margin-left: 4px; }
.tray .score { width: 22px; height: 22px; align-items: center; margin: 0 6px 0 13px; border-radius: 50%; background: #13b868; border: 1px solid #3ddc8e; }
.clock { display: flex; flex-direction: column; align-items: center; width: 115px; line-height: 19px; border-right: 1px solid #333; margin-right: 4px; }

/* floating windows */
.recorder { position: fixed; right: 0; bottom: 40px; width: 360px; height: 60px; display: grid; grid-template: 29px 29px / 48px 28px 77px 1fr 28px 28px 28px; gap: 1px; padding: 1px; background: #444; color: #fff; }
.recorder > *, .tools i { background: linear-gradient(#8a8a8a, #6c6c6c); }
.recorder .rec { grid-row: span 2; }
.rec i { width: 25px; height: 25px; background: #d8032b; box-shadow: 0 0 4px 1px #eee; }
.recorder > :nth-child(3) { grid-area: 2 / 2; }
.recorder output { grid-area: 1 / 3 / 3 / 4; background: #000; color: #86e086; font: 17px/58px "Liberation Sans", sans-serif; text-align: center; }
.res { display: flex; align-items: center; justify-content: center; font-size: 13px; text-shadow: 0 0 2px #000; }
.recorder .lit { background: #d0d4d4; }
.tools { grid-area: 2 / 4 / 3 / 8; display: grid; grid-template-columns: repeat(7, 1fr); gap: 1px; }
.recorder .tools { background: #444; }
.tools i { display: flex; justify-content: center; padding-top: 4px; }
.ime { position: fixed; right: 0; bottom: 38px; width: 206px; height: 24px; display: flex; align-items: center; justify-content: space-between; padding: 0 3px 0 0; background: #f8fafc; border-radius: 3px; color: #1f74c4; }
.ime b { font-size: 15px; margin-left: -2px; }
.slogo { margin-left: -4px; }
.activate { position: fixed; right: 99px; bottom: 88px; width: 190px; color: rgba(150, 150, 150, .7); white-space: nowrap; }
.activate p { font-size: 15px; line-height: 20px; }
.activate p:first-child { font-size: 20px; line-height: 30px; }
```
